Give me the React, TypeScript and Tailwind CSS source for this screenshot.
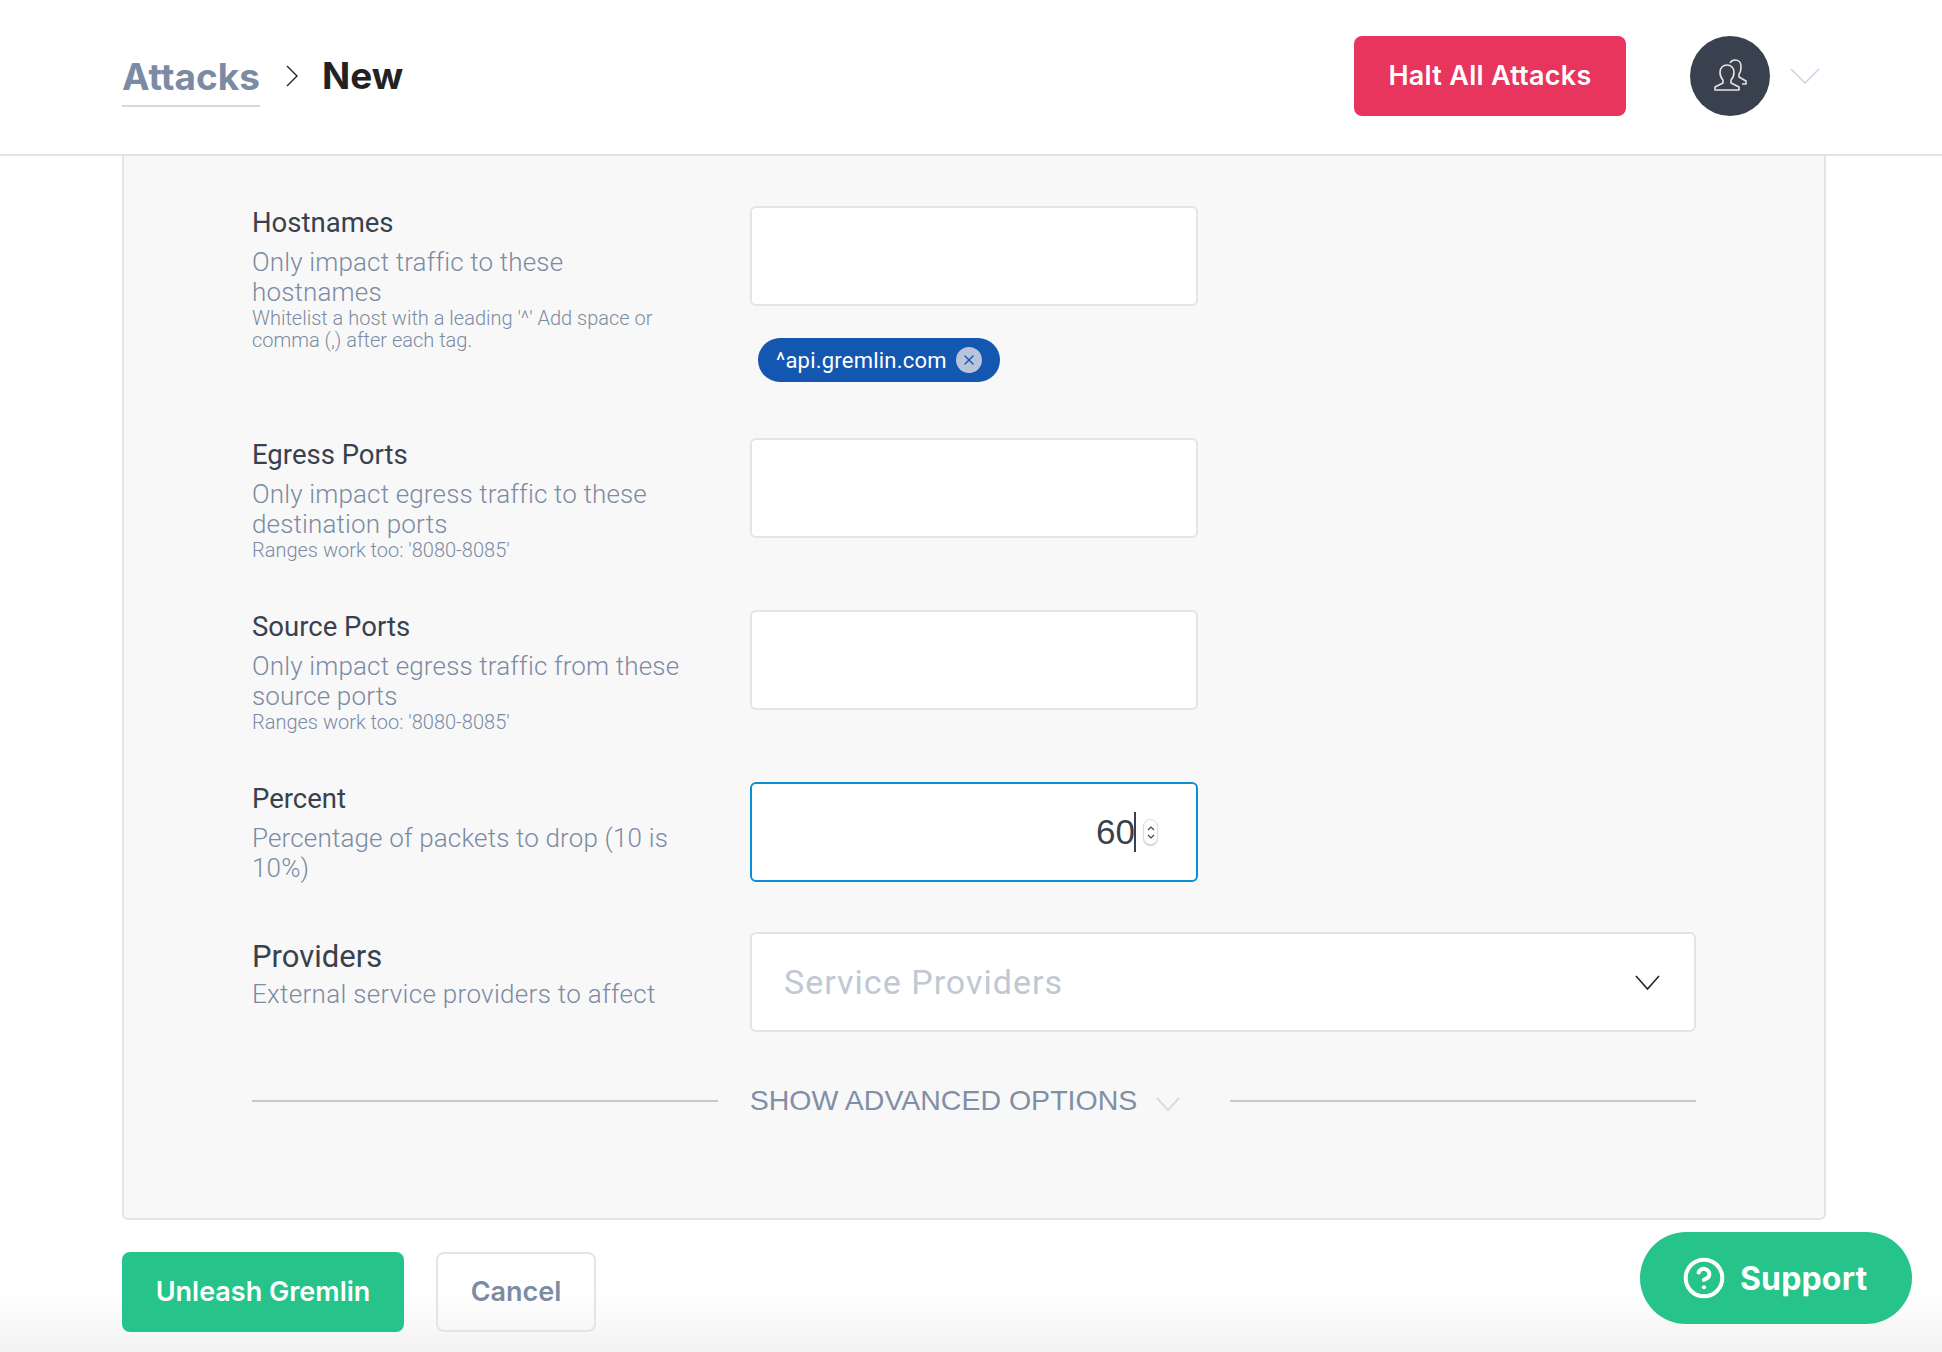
import React from "react";
import { CircleHelp, X } from "lucide-react";

const Chevron: React.FC<{ w: number; h: number; stroke: string; sw?: number; className?: string }> = ({ w, h, stroke, sw = 1.5, className }) => (
  <svg width={w} height={h} viewBox={`0 0 ${w} ${h}`} fill="none" stroke={stroke} strokeWidth={sw} className={className}>
    <polyline points={`1,1 ${w / 2},${h - 1} ${w - 1},1`} />
  </svg>
);

const Row: React.FC<{ label: string; desc: string; note?: string; height: string; big?: boolean; children: React.ReactNode }> = ({ label, desc, note, height, big, children }) => (
  <div className={`flex ${height}`}>
    <div className="w-[498px] shrink-0">
      {big ? (
        <div className="mt-[9px] text-[31px] leading-[32px] text-[#3a414e]">{label}</div>
      ) : (
        <div className="mt-[1px] text-[27.5px] leading-[32px] text-[#3a414e]">{label}</div>
      )}
      <div className={`${big ? "mt-[6px] tracking-[0.012em]" : "mt-[8px] tracking-[0.006em]"} w-[436px] text-[26px] leading-[30px] font-light text-[#7b8ba3]`}>{desc}</div>
      {note && <div className="w-[440px] text-[20px] leading-[22px] font-light text-[#7b8ba3]">{note}</div>}
    </div>
    <div>{children}</div>
  </div>
);

const EmptyInput = () => <div className="w-[448px] h-[100px] bg-white border-2 border-[#e4e4e4] rounded-[6px]" />;

export default function App() {
  return (
    <div className="relative h-[1352px] w-[1942px] overflow-hidden bg-white font-['Roboto',sans-serif]">
      <header className="h-[156px] border-b-2 border-[#e4e4e4] pl-[122px] pr-[122px] pb-[2px] flex items-center justify-between">
        <div className="flex items-center font-['Inter',sans-serif] text-[37px] font-bold">
          <span className="text-[#7b8ba3] border-b-2 border-[#d5d8e2] pb-[4px] mt-[8px] leading-[48px]">Attacks</span>
          <svg width="12" height="22" viewBox="0 0 12 22" fill="none" stroke="#222" strokeWidth="1.4" className="ml-[26px] mr-[24px]">
            <polyline points="1,1 11,11 1,21" />
          </svg>
          <span className="text-[#222]">New</span>
        </div>
        <div className="flex items-center font-['Inter',sans-serif]">
          <button className="w-[272px] h-[80px] bg-[#e8355d] text-white text-[27px] tracking-[0.01em] font-semibold rounded-[8px] pt-[1px]">Halt All Attacks</button>
          <div className="ml-[64px] w-[80px] h-[80px] rounded-full bg-[#3a414e] flex items-center justify-center">
            <svg width="36" height="36" viewBox="0 0 36 36" fill="none" stroke="#e4e4e4" strokeWidth="1.6" strokeLinejoin="round">
              <path d="M3 32v-3l8-4v-3c-2-2-3-4-3-8 0-4 3-7 7-7s7 3 7 7c0 4-1 6-3 8v3l8 4v3z" />
              <path d="M18 5c1-2 3-3 5-3 4 0 6 3 6 6 0 4 0 6-2 8v3l7 4v3h-4" />
            </svg>
          </div>
          <Chevron w={30} h={16} stroke="#c9d3e6" className="ml-[20px]" />
        </div>
      </header>

      <main className="mx-[122px] h-[1064px] w-[1704px] bg-[#f8f8f8] border-2 border-t-0 border-[#e4e4e4] rounded-b-[6px] pt-[50px] pl-[128px] pr-[128px]">
        <Row
          label="Hostnames"
          desc="Only impact traffic to these hostnames"
          note="Whitelist a host with a leading '^' Add space or comma (,) after each tag."
          height="h-[232px]"
        >
          <EmptyInput />
          <div className="mt-[32px] ml-[8px] w-[242px] h-[44px] rounded-full bg-[#1457b0] flex items-center pl-[18px] text-[22px] tracking-[0.01em] text-white">
            ^api.gremlin.com
            <span className="ml-[9px] w-[26px] h-[26px] rounded-full bg-[#b9c4da] flex items-center justify-center text-[#1457b0]">
              <X className="w-[16px] h-[16px]" strokeWidth={2} />
            </span>
          </div>
        </Row>
        <Row label="Egress Ports" desc="Only impact egress traffic to these destination ports" note="Ranges work too: '8080-8085'" height="h-[172px]">
          <EmptyInput />
        </Row>
        <Row label="Source Ports" desc="Only impact egress traffic from these source ports" note="Ranges work too: '8080-8085'" height="h-[172px]">
          <EmptyInput />
        </Row>
        <Row label="Percent" desc="Percentage of packets to drop (10 is 10%)" height="h-[150px]">
          <div className="w-[448px] h-[100px] bg-white border-2 border-[#0c8ed6] rounded-[6px] flex items-center justify-end pr-[38px] font-['Liberation_Sans',sans-serif] text-[35px] text-[#3a414e]">
            <span className="-mr-[1px]">60</span>
            <span className="w-[2px] h-[40px] bg-[#3a414e]" />
            <span className="ml-[7px] w-[15px] h-[26px] rounded-full bg-white border border-[#ddd] shadow-[0_1px_1px_rgba(0,0,0,0.2)] flex flex-col items-center justify-center gap-[3px]">
              <Chevron w={8} h={5} stroke="#444" sw={1.2} className="rotate-180" />
              <Chevron w={8} h={5} stroke="#444" sw={1.2} />
            </span>
          </div>
        </Row>
        <Row label="Providers" desc="External service providers to affect" height="h-[132px]" big>
          <div className="w-[946px] h-[100px] bg-white border-2 border-[#e4e4e4] rounded-[6px] flex items-center justify-between pl-[32px] pr-[34px]">
            <span className="text-[34px] text-[#c0c8d4] tracking-[0.03em]">Service Providers</span>
            <Chevron w={25} h={15} stroke="#222" sw={1.6} className="mt-[1px]" />
          </div>
        </Row>
        <div className="flex items-center h-[74px]">
          <div className="w-[466px] h-[2px] bg-[#c8c8c8]" />
          <span className="ml-[32px] -mt-[2px] whitespace-nowrap text-[28.5px] text-[#7f8fa7] font-['Liberation_Sans',sans-serif]">SHOW ADVANCED OPTIONS</span>
          <Chevron w={24} h={14} stroke="#c9d3e6" className="ml-[19px] mt-[6px]" />
          <div className="ml-[50px] w-[466px] h-[2px] bg-[#c8c8c8]" />
        </div>
      </main>

      <div className="absolute inset-x-0 bottom-0 h-[60px] bg-gradient-to-b from-transparent to-[#f2f2f2]" />

      <footer className="relative pl-[122px] mt-[32px] flex gap-[32px] font-['Inter',sans-serif] text-[27px] font-semibold">
        <button className="w-[282px] h-[80px] bg-[#26c48a] text-white rounded-[8px] pt-[1px]">Unleash Gremlin</button>
        <button className="w-[160px] h-[80px] border-2 border-[#e4e4e4] text-[#7b8ba3] rounded-[8px] pt-[1px]">Cancel</button>
      </footer>

      <button className="absolute left-[1640px] top-[1232px] w-[272px] h-[92px] rounded-full bg-[#26c48a] text-white flex items-center pl-[42px] gap-[14px] font-['Inter',sans-serif] text-[32px] font-bold tracking-[0.005em]">
        <CircleHelp className="w-[44px] h-[44px]" strokeWidth={2.2} />
        <span className="mt-[2px]">Support</span>
      </button>
    </div>
  );
}
